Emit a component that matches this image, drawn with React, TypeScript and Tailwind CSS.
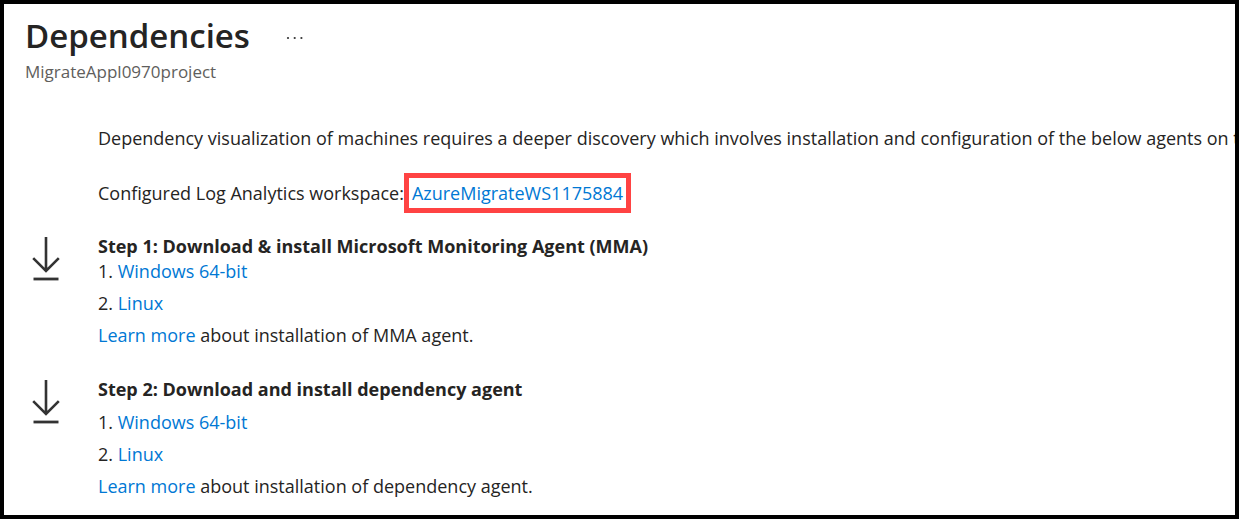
import React from "react";

function DownloadIcon() {
  return (
    <svg width="28" height="46" viewBox="0 0 28 46" fill="none" stroke="#333333" strokeWidth="2.6" aria-hidden="true">
      <path d="M14 0V34M1.2 21.2L14 34L26.8 21.2" />
      <path d="M1.5 42H26.5" strokeWidth="2.8" />
    </svg>
  );
}

function MoreIcon() {
  return (
    <svg width="18" height="4" viewBox="0 0 18 4" fill="#333333" aria-hidden="true">
      <circle cx="2" cy="2" r="1.1" />
      <circle cx="8.7" cy="2" r="1.1" />
      <circle cx="15.4" cy="2" r="1.1" />
    </svg>
  );
}

const link = "text-[#0078d4] hover:underline";

function Step({ title, agent, listClass }: { title: string; agent: string; listClass: string }) {
  return (
    <section className="flex">
      <div className="w-[70px] shrink-0 pl-1">
        <DownloadIcon />
      </div>
      <div>
        <h2 className="text-[18px] font-bold leading-[18px]">{title}</h2>
        <ol className={listClass}>
          <li>1. <a href="#windows" className={link}>Windows 64-bit</a></li>
          <li>2. <a href="#linux" className={link}>Linux</a></li>
        </ol>
        <p className="leading-8">
          <a href="#learn" className={link}>Learn more</a> about installation of {agent}.
        </p>
      </div>
    </section>
  );
}

export default function App() {
  return (
    <main className="min-h-screen overflow-hidden border-4 border-black bg-white px-[21px] pt-2 pb-1 font-['Open_Sans',sans-serif] text-[18px] text-[#252423]">
      <header>
        <div className="flex items-center gap-9">
          <h1 className="text-[33px] font-semibold leading-[48px]">Dependencies</h1>
          <button type="button" aria-label="More options" className="pt-3 pb-2">
            <MoreIcon />
          </button>
        </div>
        <p className="text-[17px] leading-6 text-[#605e5c]">MigrateAppl0970project</p>
      </header>
      <div className="pl-[73px] pt-[38px]">
        <p className="whitespace-nowrap leading-8">
          Dependency visualization of machines requires a deeper discovery which involves installation and configuration of the below agents on the
        </p>
        <p className="mt-[19px] flex items-center leading-[30px]">
          Configured Log Analytics workspace:
          <a href="#workspace" className="border-[5px] border-[#ff4343] px-[3px] text-[#0078d4]">AzureMigrateWS1175884</a>
        </p>
      </div>
      <div className="mt-6 flex flex-col gap-[29px] pl-[3px]">
        <Step title="Step 1: Download & install Microsoft Monitoring Agent (MMA)" agent="MMA agent" listClass="leading-8" />
        <Step title="Step 2: Download and install dependency agent" agent="dependency agent" listClass="leading-8 pt-2" />
      </div>
    </main>
  );
}
